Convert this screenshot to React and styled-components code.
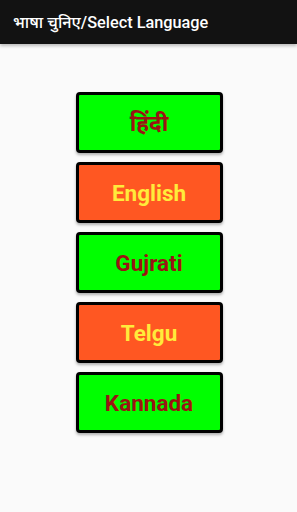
import React from "react";
import styled, { createGlobalStyle } from "styled-components";

const Global = createGlobalStyle`
  html, body { margin: 0; padding: 0; background: #fafafa; }
  body { font-family: Roboto, "Noto Sans", "Noto Sans Devanagari", sans-serif; }
  * { box-sizing: border-box; }
`;

const Page = styled.div`
  width: 297px;
  height: 512px;
  background: #fafafa;
  display: flex;
  flex-direction: column;
`;

const Toolbar = styled.header`
  height: 44px;
  background: #121212;
  color: #fff;
  display: flex;
  align-items: center;
  padding-left: 13px;
  font-size: 16.3px;
  font-weight: 500;
  box-shadow: 0 2px 3px rgba(0, 0, 0, 0.25);
`;

const List = styled.div`
  display: flex;
  flex-direction: column;
  align-items: center;
  gap: 9px;
  padding-top: 48px;
  padding-left: 1px;
`;

const LangButton = styled.button`
  width: 147px;
  height: 61px;
  border: 3px solid #000;
  border-radius: 4px;
  background: ${(p) => (p.$alt ? "#ff5722" : "#00ff00")};
  color: ${(p) => (p.$alt ? "#ffeb3b" : "#9b1313")};
  font-family: Roboto, "Noto Sans", "Noto Sans Devanagari", sans-serif;
  font-size: 22.5px;
  font-weight: 700;
  display: flex;
  align-items: center;
  justify-content: center;
  padding: 0;
  box-shadow: 0 2px 3px rgba(0, 0, 0, 0.3);
`;

const langs = ["हिंदी", "English", "Gujrati", "Telgu", "Kannada"];

export default function App() {
  return (
    <Page>
      <Global />
      <Toolbar>भाषा चुनिए/Select Language</Toolbar>
      <List>
        {langs.map((l, i) => (
          <LangButton key={l} $alt={i % 2 === 1}>
            {l}
          </LangButton>
        ))}
      </List>
    </Page>
  );
}
